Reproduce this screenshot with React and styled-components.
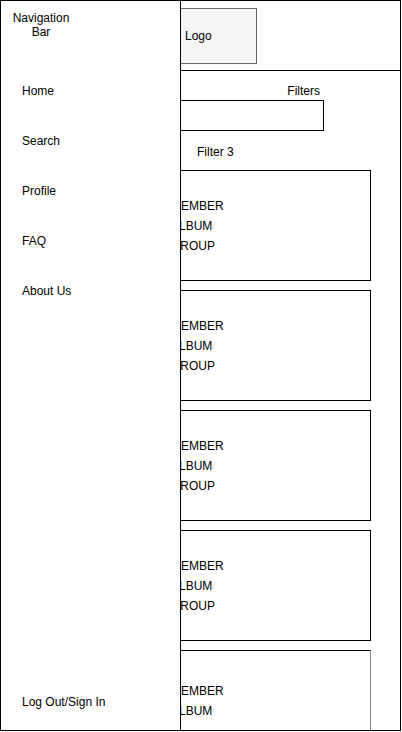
import styled, { createGlobalStyle } from "styled-components";

const navItems = ["Home", "Search", "Profile", "FAQ", "About Us"];
const cards = [
  ["MEMBER", "ALBUM", "GROUP"],
  ["MEMBER", "ALBUM", "GROUP"],
  ["MEMBER", "ALBUM", "GROUP"],
  ["MEMBER", "ALBUM", "GROUP"],
  ["MEMBER", "ALBUM"],
];

export default function App() {
  return (
    <>
      <GlobalStyle />
      <Frame>
        <Sidebar>
          <NavTitle>Navigation Bar</NavTitle>

          <NavList>
            {navItems.map((item) => (
              <NavItem key={item}>{item}</NavItem>
            ))}
          </NavList>

          <LogOut>Log Out/Sign In</LogOut>
        </Sidebar>

        <Main>
          <Header>
            <Logo>Logo</Logo>
          </Header>

          <FilterBlock>
            <FilterLabel>Filters</FilterLabel>
            <FilterInput />
          </FilterBlock>

          <FilterTag>Filter 3</FilterTag>

          <CardList>
            {cards.map((lines, i) => (
              <Card key={i} $last={i === cards.length - 1}>
                {lines.map((line) => (
                  <CardLine key={line}>{line}</CardLine>
                ))}
              </Card>
            ))}
          </CardList>
        </Main>
      </Frame>
    </>
  );
}

const GlobalStyle = createGlobalStyle`
  * {
    box-sizing: border-box;
  }

  body {
    margin: 0;
    background: #fff;
    color: #000;
    font-family: "Liberation Sans", Arial, Helvetica, sans-serif;
    font-size: 12px;
  }
`;

const Frame = styled.div`
  display: grid;
  grid-template-columns: 180px minmax(0, 1fr);
  grid-template-rows: minmax(0, 1fr);
  width: 401px;
  height: 731px;
  border: 1px solid #000;
  overflow: hidden;
`;

const Sidebar = styled.nav`
  display: flex;
  flex-direction: column;
  padding: 10px 0 21px;
  border-right: 1px solid #000;
`;

const NavTitle = styled.div`
  width: 80px;
  padding: 0 10px;
  line-height: 14px;
  text-align: center;
`;

const NavList = styled.div`
  display: flex;
  flex-direction: column;
  gap: 36px;
  margin-top: 45px;
  padding-left: 21px;
`;

const NavItem = styled.div`
  line-height: 14px;
`;

const LogOut = styled.div`
  margin-top: auto;
  padding-left: 21px;
  line-height: 14px;
`;

const Main = styled.main`
  display: flex;
  flex-direction: column;
  overflow: hidden;
`;

const Header = styled.header`
  flex-shrink: 0;
  height: 70px;
  padding-top: 7px;
  border-bottom: 1px solid #000;
`;

const Logo = styled.div`
  display: flex;
  align-items: center;
  width: 76px;
  height: 56px;
  padding-left: 4px;
  background: #f5f5f5;
  border: 1px solid #666;
  border-left: none;
`;

const FilterBlock = styled.div`
  width: 143px;
  padding-top: 13px;
`;

const FilterLabel = styled.div`
  padding-right: 4px;
  line-height: 14px;
  text-align: right;
`;

const FilterInput = styled.div`
  height: 31px;
  margin-top: 2px;
  border: 1px solid #000;
  border-left: none;
`;

const FilterTag = styled.div`
  margin-top: 14px;
  padding-left: 16px;
  line-height: 14px;
`;

const CardList = styled.div`
  display: flex;
  flex-direction: column;
  gap: 9px;
  margin-top: 11px;
  margin-left: -11px;
`;

const Card = styled.div`
  flex-shrink: 0;
  width: 201px;
  height: ${({ $last }) => ($last ? "121px" : "111px")};
  padding-top: ${({ $last }) => ($last ? "30px" : "25px")};
  border: 1px solid #000;
  border-right-color: ${({ $last }) => ($last ? "#888" : "#000")};
`;

const CardLine = styled.div`
  line-height: 20px;
`;
